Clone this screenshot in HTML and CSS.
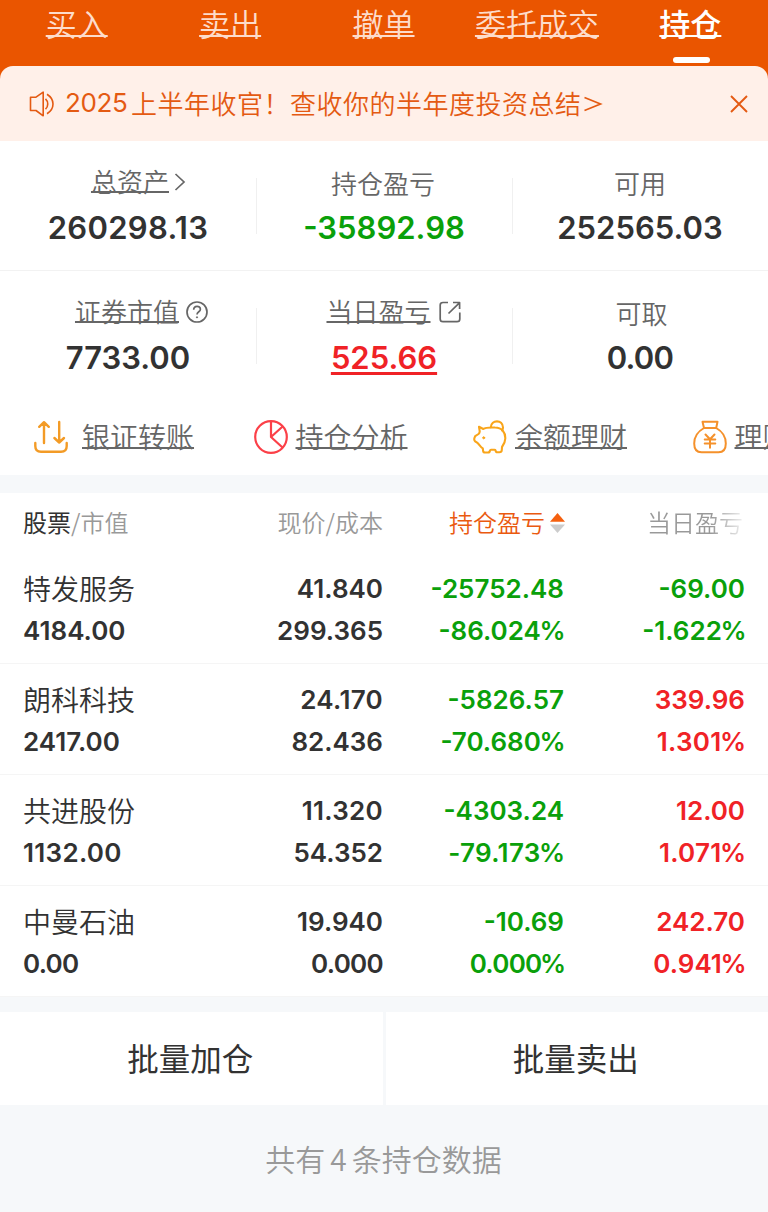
FILE: index.html
```html
<!DOCTYPE html>
<html lang="zh-CN">
<head>
<meta charset="utf-8">
<title>持仓</title>
<link rel="stylesheet" href="styles.css">
</head>
<body>
<nav class="tabs">
  <a class="tab">买入</a><a class="tab">卖出</a><a class="tab">撤单</a><a class="tab">委托成交</a><a class="tab active">持仓</a>
</nav>
<div class="banner-wrap">
  <div class="banner">
    <svg class="speaker" width="26" height="26" viewBox="0 0 26 26" fill="none" stroke="#e45a12" stroke-width="1.6"><path d="M1.5 6.2H7L14.2 1.2V24.8L7 19.5H1.5Z" stroke-linejoin="round"/><path d="M16.5 7.8C19.5 10.5 19.5 15.5 16.5 18.2M18 3.2C26 8.2 26 17.8 18 22.8"/></svg>
    <p class="banner-text"><span class="year">2025</span><span class="msg">上半年收官！查收你的半年度投资总结</span></p>
    <svg class="more" width="20" height="18" viewBox="0 0 20 18" fill="none" stroke="#e45a12" stroke-width="1.7"><path d="M1.5 2.5L17.5 9L1.5 15.5"/></svg>
    <svg class="close" width="18" height="18" viewBox="0 0 18 18" fill="none" stroke="#e45a12" stroke-width="1.9"><path d="M1 1L17 17M17 1L1 17"/></svg>
  </div>
</div>
<section class="metrics">
  <div class="metric">
    <div class="label linked l1"><u>总资产</u><svg class="chev" width="12" height="18" viewBox="0 0 12 18" fill="none" stroke="#666" stroke-width="1.7"><path d="M1.5 1L10 9L1.5 17"/></svg></div>
    <div class="num wide">260298.13</div>
  </div>
  <div class="metric"><div class="label l2">持仓盈亏</div><div class="num green">-35892.98</div></div>
  <div class="metric"><div class="label">可用</div><div class="num">252565.03</div></div>
</section>
<section class="metrics second">
  <div class="metric">
    <div class="label linked l4"><u>证券市值</u><svg class="help" width="22" height="22" viewBox="0 0 22 22" fill="none" stroke="#666" stroke-width="1.7"><circle cx="11" cy="11" r="10"/><path d="M7.7 8.8C7.7 4.1 14.4 4.4 14.4 8.2C14.4 10.8 11 10.8 11 13.6"/><circle cx="11" cy="16.3" r=".6" fill="#666" stroke-width="1"/></svg></div>
    <div class="num">7733.00</div>
  </div>
  <div class="metric">
    <div class="label linked l5"><u>当日盈亏</u><svg class="open" width="22" height="22" viewBox="0 0 22 22" fill="none" stroke="#666" stroke-width="1.7" stroke-linejoin="round"><path d="M9 1.5H4Q1.2 1.5 1.2 4V18Q1.2 20.7 4 20.7H18Q20.8 20.7 20.8 18V11.5M14 1.5H20.6V8M20.4 1.8L9.5 12.5"/></svg></div>
    <div class="num red under">525.66</div>
  </div>
  <div class="metric"><div class="label l6">可取</div><div class="num tight">0.00</div></div>
</section>
<section class="links">
  <a class="link first"><svg width="34" height="34" viewBox="0 0 34 34" fill="none" stroke="#f39b26" stroke-width="2.4" stroke-linecap="round" stroke-linejoin="round"><path d="M1.3 23V26Q1.3 31.8 7 31.8H27Q32.7 31.8 32.7 26V23M10 23V2.2M5.2 6.8L10 2.2L14.8 6.8M25.2 2V22.5M20.4 18L25.2 22.5L30 18"/></svg><u>银证转账</u></a>
  <a class="link"><svg width="34" height="34" viewBox="0 0 34 34" fill="none" stroke="#fb4048" stroke-width="2.2"><circle cx="17" cy="17" r="15.8"/><path d="M17 1V17L28.5 27.5M17 17L28.6 6.5" stroke-linejoin="round"/></svg><u>持仓分析</u></a>
  <a class="link"><svg width="34" height="34" viewBox="0 0 34 34" fill="none" stroke="#f9a51a" stroke-width="2.1" stroke-linejoin="round" stroke-linecap="round"><path d="M6 6.8L10.3 9C13 7 18 7.4 22 7.5C29 7.5 32.5 12.5 32.3 18.5C32.2 22.5 30.5 25 29 27L28.8 30Q28.7 32.3 26.3 32.3H24.5Q22.8 32.3 22.5 30.3Q22.3 29.7 21.5 29.7H18Q17.2 29.7 17 30.5Q16.7 32.5 15 32.5H12Q10.3 32.5 10.1 30.8L9.8 28.3C7.5 27 6.3 24.5 4.8 23.2L2.2 21.4Q.8 20.2 1.4 18.2L2.2 16.2L5.5 14Q6.8 12.7 6.7 11.2Z"/><path d="M17.8 7.2C18.2-.5 29.8-.8 30 7.5Q30 9 29 10.5"/><circle cx="10.7" cy="17.8" r="1" fill="#f9a51a" stroke-width="1"/></svg><u>余额理财</u></a>
  <a class="link"><svg width="34" height="34" viewBox="0 0 34 34" fill="none" stroke="#f5912b" stroke-width="2" stroke-linecap="round" stroke-linejoin="round"><path d="M9.5 1.8H24.5L23.2 8H11ZM11 8C4.8 11.5 1.2 17.5 1.2 23.5C1.2 29.5 3.5 32.3 8.5 32.3H25.5C30.5 32.3 32.8 29.5 32.8 23.5C32.8 17.5 29.4 11.5 23.2 8M12.5 14.5L17 19.2L21.5 14.5M17 19.2V27.8M11.7 19.4H22.3M11.7 23.5H22.3"/></svg><u>理财</u></a>
</section>
<section class="table">
  <div class="thead">
    <div><span class="strong">股票</span>/市值</div><div>现价/成本</div>
    <div class="sorted">持仓盈亏<svg class="sort" width="15" height="20" viewBox="0 0 15 20"><path d="M7.5 0L15 8.7H0Z" fill="#f5600f"/><path d="M7.5 20L15 11.5H0Z" fill="#ccc"/></svg></div>
    <div class="fade">当日盈亏</div>
  </div>
  <div class="row"><div class="name">特发服务</div><div>41.840</div><div class="green">-25752.48</div><div class="green">-69.00</div><div>4184.00</div><div>299.365</div><div class="green">-86.024<span class="pct">%</span></div><div class="green">-1.622<span class="pct">%</span></div></div>
  <div class="row"><div class="name">朗科科技</div><div class="wide">24.170</div><div class="green">-5826.57</div><div class="red">339.96</div><div>2417.00</div><div>82.436</div><div class="green">-70.680<span class="pct">%</span></div><div class="red wide">1.301<span class="pct">%</span></div></div>
  <div class="row"><div class="name">共进股份</div><div class="wide">11.320</div><div class="green">-4303.24</div><div class="red">12.00</div><div class="wide">1132.00</div><div>54.352</div><div class="green wide">-79.173<span class="pct">%</span></div><div class="red wide">1.071<span class="pct">%</span></div></div>
  <div class="row"><div class="name">中曼石油</div><div>19.940</div><div class="green">-10.69</div><div class="red">242.70</div><div class="tight">0.00</div><div class="tight">0.000</div><div class="green tight">0.000<span class="pct">%</span></div><div class="red">0.941<span class="pct">%</span></div></div>
</section>
<section class="actions"><a class="action">批量加仓</a><a class="action">批量卖出</a></section>
<footer class="summary">共有<span class="count">4</span>条持仓数据</footer>
</body>
</html>
```
FILE: styles.css
```css
* { box-sizing: border-box; }
body {
  margin: 0;
  width: 768px;
  height: 1212px;
  overflow: hidden;
  background: #f6f8fa;
  color: #323232;
  font-family: "Noto Sans CJK SC", sans-serif;
  font-weight: 350;
}
p { margin: 0; }
svg { flex: none; display: block; }
u { text-decoration-thickness: 2px; text-underline-offset: -1px; text-decoration-skip-ink: none; }
.green { color: #0aa00a; }
.red { color: #f02226; }

.tabs { display: flex; height: 66px; padding-right: 1px; background: #ea5500; }
.tab {
  flex: 1;
  display: flex;
  flex-direction: column;
  align-items: center;
  height: 66px;
  font-size: 31px;
  line-height: 46px;
  color: #fddccb;
  text-decoration: underline 2px;
  text-underline-offset: -1px;
  text-decoration-skip-ink: none;
}
.active { color: #fff; font-weight: 500; }
.active::after { content: ""; width: 37px; height: 6px; margin: 11px 0 0 2px; border-radius: 3px; background: #fff; }

.banner-wrap { background: #ea5500; }
.banner {
  display: flex;
  align-items: center;
  height: 75px;
  padding: 0 20px 0 29px;
  border-radius: 13px 13px 0 0;
  background: #fff0e9;
  color: #e45a12;
}
.banner-text { display: flex; align-items: center; margin: -2px 0 0 10px; font-size: 26px; line-height: 40px; letter-spacing: .5px; }
.year { width: 66px; padding-top: 1px; font-family: Inter, sans-serif; font-weight: 400; font-size: 26px; letter-spacing: -.4px; }
.more { margin-left: 1px; }
.close { margin-left: auto; }

.metrics { display: grid; grid-template-columns: repeat(3, 256px); height: 130px; padding-top: 23px; background: #fff; border-bottom: 1px solid #f2f2f2; }
.second { height: 129px; border-bottom: 0; }
.metric { position: relative; text-align: center; }
.metric + .metric::before { content: ""; position: absolute; left: 0; top: 14px; width: 1px; height: 56px; background: #f0f0f0; }
.label { display: flex; justify-content: center; align-items: center; height: 38px; font-size: 26px; line-height: 38px; color: #666; }
.linked { height: 35px; margin-bottom: 3px; }
.linked u { margin-top: -2px; }
.l1 { padding-left: 21px; }
.l2 { padding-right: 2px; }
.l4 { padding-left: 27px; }
.l5 { padding-left: 19px; }
.l6 { padding-left: 3px; }
.chev { margin-left: 5px; }
.help { margin-left: 7px; }
.open { margin-left: 8px; }
.num { padding-top: 1px; font: 600 31px/50px Inter, sans-serif; }
.under { text-decoration: underline 3px; text-underline-offset: 3px; text-decoration-skip-ink: none; }
.wide { letter-spacing: .3px; }
.tight { letter-spacing: -.7px; }

.links { display: flex; height: 75px; padding-left: 34px; background: #fff; overflow: hidden; }
.link { flex: none; display: flex; align-items: center; gap: 8px; width: 219.5px; height: 74px; font-size: 28px; line-height: 40px; color: #666; }
.link u { margin-top: -2px; }
.first { gap: 14px; }

.table { margin-top: 18px; background: #fff; }
.thead, .row { display: grid; grid-template-columns: 160px 200px 181px 181px; padding-left: 23px; text-align: right; }
.thead > :first-child, .row > :nth-child(4n + 1) { text-align: left; }
.thead { height: 60px; font-size: 24px; line-height: 58px; color: #999; }
.strong { color: #323232; font-weight: 400; }
.sorted { display: flex; justify-content: flex-end; align-items: center; height: 58px; color: #ea5a10; font-weight: 350; }
.sort { margin: 2px -1px 0 5px; }
.fade { padding-right: 2px; color: transparent; background: linear-gradient(to right, #999 147px, #fff 185px); background-clip: text; }
.row { grid-template-rows: 42px 42px; height: 111px; padding-top: 15px; border-bottom: 1px solid #f5f5f5; font: 600 26px/42px Inter, sans-serif; }
.row .name { font: 350 28px/40px "Noto Sans CJK SC", sans-serif; }
.pct { margin: 0 -1.5px; }

.actions { display: flex; gap: 3px; margin-top: 15px; height: 93px; }
.action { flex: 1; padding-right: 2px; background: #fff; text-align: center; font-size: 31.5px; line-height: 91px; font-weight: 400; }
.summary { padding-right: 1px; text-align: center; font-size: 30px; line-height: 107px; color: #999; }
.count { margin: 0 5px; }
```
